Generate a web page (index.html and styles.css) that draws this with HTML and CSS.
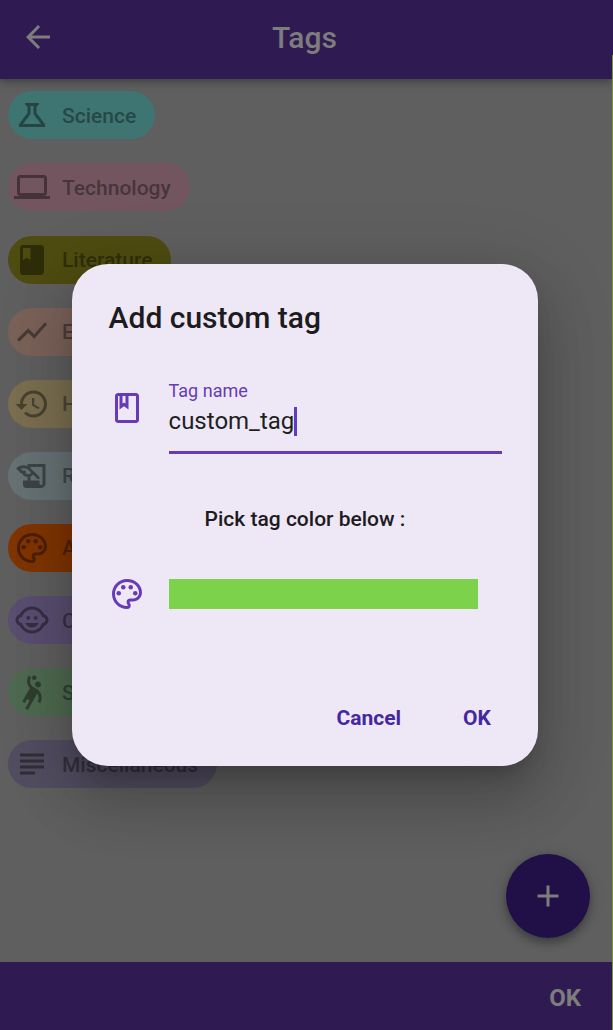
FILE: index.html
```html
<!DOCTYPE html>
<html lang="en">
<head>
<meta charset="utf-8">
<title>Tags</title>
<link rel="stylesheet" href="styles.css">
</head>
<body>
<div class="screen">
  <header class="appbar">
    <svg class="back" viewBox="0 0 24 24"><path d="M20 11H7.83l5.59-5.59L12 4l-8 8 8 8 1.41-1.41L7.83 13H20v-2z"/></svg>
    <h1 class="title">Tags</h1>
  </header>
  <main class="tags">
    <div class="chip science"><svg class="icon" viewBox="0 0 24 24"><path d="M13 11.33L18 18H6l5-6.67V6h2m3.6-2H7.4v1L9 6.5v4.17L3.2 18.4V20h17.6v-1.6L15 10.67V6.5L16.6 5z"/></svg><span>Science</span></div>
    <div class="chip technology"><svg class="icon" viewBox="0 0 24 24"><path d="M20 18c1.1 0 1.99-.9 1.99-2L22 6c0-1.1-.9-2-2-2H4c-1.1 0-2 .9-2 2v10c0 1.1.9 2 2 2H0v2h24v-2h-4zM4 6h16v10H4V6z"/></svg><span>Technology</span></div>
    <div class="chip literature"><svg class="icon" viewBox="0 0 24 24"><path d="M18 2H6c-1.1 0-2 .9-2 2v16c0 1.1.9 2 2 2h12c1.1 0 2-.9 2-2V4c0-1.1-.9-2-2-2zM6 4h5v8l-2.5-1.5L6 12V4z"/></svg><span>Literature</span></div>
    <div class="chip economy"><svg class="icon" viewBox="0 0 24 24"><path d="M3.5 18.49l6-6.01 4 4L22 6.92l-1.41-1.41-7.09 7.97-4-4L2 16.99z"/></svg><span>Economy</span></div>
    <div class="chip history"><svg class="icon" viewBox="0 0 24 24"><path d="M13 3c-4.97 0-9 4.03-9 9H1l3.89 3.89.07.14L9 12H6c0-3.87 3.13-7 7-7s7 3.13 7 7-3.13 7-7 7c-1.93 0-3.68-.79-4.94-2.06l-1.42 1.42C8.27 19.99 10.51 21 13 21c4.97 0 9-4.03 9-9s-4.03-9-9-9zm-1 5v5l4.28 2.54.72-1.21-3.5-2.08V8H12z"/></svg><span>History</span></div>
    <div class="chip religion"><svg class="icon" viewBox="0 0 24 24"><path d="M9 4v1.38c-.83-.33-1.72-.5-2.61-.5-1.79 0-3.58.68-4.95 2.05l3.33 3.33h1.11v1.11c.86.86 1.98 1.31 3.11 1.36V15H6v3c0 1.1.9 2 2 2h10c1.66 0 3-1.34 3-3V4H9zm-1.11 6.41V8.26H5.61L4.57 7.22a5.07 5.07 0 0 1 1.82-.34c1.34 0 2.59.52 3.54 1.46l1.41 1.41-.2.2a2.7 2.7 0 0 1-1.92.8c-.47 0-.93-.12-1.33-.34zM19 17c0 .55-.45 1-1 1s-1-.45-1-1v-2h-6v-2.59c.57-.23 1.1-.57 1.56-1.03l.2-.2L15.59 14H17v-1.41l-6-5.97V6h8v11z"/></svg><span>Religion</span></div>
    <div class="chip art"><svg class="icon" viewBox="0 0 24 24"><path d="M12 22C6.49 22 2 17.51 2 12S6.49 2 12 2s10 4.04 10 9c0 3.31-2.69 6-6 6h-1.77c-.28 0-.5.22-.5.5 0 .12.05.23.13.33.41.47.64 1.06.64 1.67A2.5 2.5 0 0 1 12 22zm0-18c-4.41 0-8 3.59-8 8s3.59 8 8 8c.28 0 .5-.22.5-.5a.54.54 0 0 0-.14-.35c-.41-.46-.63-1.05-.63-1.65a2.5 2.5 0 0 1 2.5-2.5H16c2.21 0 4-1.79 4-4 0-3.86-3.59-7-8-7z"/><circle cx="6.5" cy="11.5" r="1.5"/><circle cx="9.5" cy="7.5" r="1.5"/><circle cx="14.5" cy="7.5" r="1.5"/><circle cx="17.5" cy="11.5" r="1.5"/></svg><span>Art</span></div>
    <div class="chip children"><svg class="icon" viewBox="0 0 24 24"><circle cx="14.5" cy="10.5" r="1.25"/><circle cx="9.5" cy="10.5" r="1.25"/><path d="M22.94 12.66c.04-.21.06-.43.06-.66s-.02-.45-.06-.66c-.25-1.51-1.36-2.74-2.81-3.17-.53-1.12-1.28-2.1-2.19-2.91C16.36 3.85 14.28 3 12 3s-4.36.85-5.94 2.26c-.92.81-1.67 1.8-2.19 2.91-1.45.43-2.56 1.65-2.81 3.17-.04.21-.06.43-.06.66s.02.45.06.66c.25 1.51 1.36 2.74 2.81 3.17.52 1.11 1.27 2.09 2.17 2.89C7.62 20.14 9.71 21 12 21s4.38-.86 5.97-2.28c.9-.8 1.65-1.79 2.17-2.89 1.44-.43 2.55-1.65 2.8-3.17zM19 14c-.1 0-.19-.02-.29-.03-.2.67-.49 1.29-.86 1.86C16.6 17.74 14.45 19 12 19s-4.6-1.26-5.85-3.17c-.37-.57-.66-1.19-.86-1.86-.1.01-.19.03-.29.03-1.1 0-2-.9-2-2s.9-2 2-2c.1 0 .19.02.29.03.2-.67.49-1.29.86-1.86C7.4 6.26 9.55 5 12 5s4.6 1.26 5.85 3.17c.37.57.66 1.19.86 1.86.1-.01.19-.03.29-.03 1.1 0 2 .9 2 2s-.9 2-2 2zM7.5 14c.76 1.77 2.49 3 4.5 3s3.74-1.23 4.5-3h-9z"/></svg><span>Children</span></div>
    <div class="chip sport"><svg class="icon" viewBox="0 0 24 24"><path d="M14.27 6c-.55.95-.22 2.18.73 2.73.95.55 2.18.22 2.73-.73.55-.95.22-2.18-.73-2.73-.95-.55-2.18-.22-2.73.73zM15.84 10.41s-1.63-.94-2.6-1.5c-2.38-1.38-3.2-4.44-1.82-6.82l-1.73-1C8.1 3.83 8.6 7.21 10.66 9.4l-5.15 8.92 1.73 1 1.5-2.6 1.73 1-3 5.2 1.73 1 6.29-10.89c1.14 1.55 1.33 3.69.31 5.46l1.73 1c1.6-2.75 1.28-6.58-1.69-9.08zM12.75 3.8c.72.41 1.63.17 2.05-.55.41-.72.17-1.63-.55-2.05-.72-.41-1.63-.17-2.05.55-.41.72-.17 1.64.55 2.05z"/></svg><span>Sport</span></div>
    <div class="chip misc"><svg class="icon" viewBox="0 0 24 24"><path d="M14 17H4v2h10v-2zm6-8H4v2h16V9zM4 15h16v-2H4v2zM4 5v2h16V5H4z"/></svg><span>Miscellaneous</span></div>
  </main>
  <footer class="bottombar">OK</footer>
  <div class="fab"><svg class="plus" viewBox="0 0 24 24"><path d="M19 13h-6v6h-2v-6H5v-2h6V5h2v6h6v2z"/></svg></div>
  <div class="edge"></div>
  <div class="overlay">
    <section class="dialog">
      <h2 class="dialog-title">Add custom tag</h2>
      <div class="row name-row">
        <svg class="icon" viewBox="0 0 24 24"><path d="M18 2H6c-1.1 0-2 .9-2 2v16c0 1.1.9 2 2 2h12c1.1 0 2-.9 2-2V4c0-1.1-.9-2-2-2zM9 4h2v5l-1-.75L9 9V4zm9 16H6V4h1v9l3-2.25L13 13V4h5v16z"/></svg>
        <div class="field">
          <div class="label">Tag name</div>
          <div class="value"><span>custom_tag</span><i class="caret"></i></div>
        </div>
      </div>
      <p class="prompt">Pick tag color below :</p>
      <div class="row color-row">
        <svg class="icon" viewBox="0 0 24 24"><path d="M12 22C6.49 22 2 17.51 2 12S6.49 2 12 2s10 4.04 10 9c0 3.31-2.69 6-6 6h-1.77c-.28 0-.5.22-.5.5 0 .12.05.23.13.33.41.47.64 1.06.64 1.67A2.5 2.5 0 0 1 12 22zm0-18c-4.41 0-8 3.59-8 8s3.59 8 8 8c.28 0 .5-.22.5-.5a.54.54 0 0 0-.14-.35c-.41-.46-.63-1.05-.63-1.65a2.5 2.5 0 0 1 2.5-2.5H16c2.21 0 4-1.79 4-4 0-3.86-3.59-7-8-7z"/><circle cx="6.5" cy="11.5" r="1.5"/><circle cx="9.5" cy="7.5" r="1.5"/><circle cx="14.5" cy="7.5" r="1.5"/><circle cx="17.5" cy="11.5" r="1.5"/></svg>
        <div class="swatch"></div>
      </div>
      <div class="actions"><span>Cancel</span><span>OK</span></div>
    </section>
  </div>
</div>
</body>
</html>
```

FILE: styles.css
```css
* { box-sizing: border-box; }
body { margin: 0; font-family: Roboto, sans-serif; }
h1, h2, p { margin: 0; }
svg { display: block; fill: currentColor; flex: none; }

.screen {
  position: relative;
  width: 613px;
  height: 1030px;
  display: flex;
  flex-direction: column;
  background: #5f5f5f;
  overflow: hidden;
}

.appbar {
  height: 79px;
  flex: none;
  display: grid;
  grid-template-columns: 36px 1fr 36px;
  align-items: center;
  padding: 0 24px 5px 20px;
  background: #2f1b52;
  color: #7d7d7d;
  box-shadow: 0 2px 9px rgba(0, 0, 0, .4);
}
.back { width: 36px; height: 36px; }
.title {
  font-size: 30px;
  line-height: 36px;
  font-weight: 500;
  text-align: center;
  padding-top: 1px;
}

.tags {
  flex: 1;
  display: flex;
  flex-direction: column;
  align-items: flex-start;
  gap: 24.1px;
  padding: 12.4px 8px 0;
}
.chip {
  height: 48px;
  flex: none;
  display: flex;
  align-items: center;
  gap: 12px;
  padding: 0 19px 0 6px;
  border-radius: 24px;
  font-size: 21px;
  line-height: 24px;
  font-weight: 500;
  color: rgba(0, 0, 0, .4);
}
.chip span { padding-top: 1px; }
.icon { width: 36px; height: 36px; }
.science { background: #3e7471; }
.technology { background: #735560; }
.literature { background: #4e4c10; }
.economy { background: #7b6259; }
.history { background: #7b6f50; }
.religion { background: #677275; }
.art { background: #803500; }
.children { background: #5a4e71; }
.sport { background: #4e6a50; }
.misc { background: #524d60; }

.bottombar {
  height: 68px;
  flex: none;
  display: flex;
  align-items: center;
  justify-content: flex-end;
  padding: 4px 32px 0 0;
  background: #2f1b52;
  color: #7d7d7d;
  font-size: 24px;
  font-weight: 700;
}

.fab {
  position: absolute;
  right: 23px;
  bottom: 92.4px;
  width: 84px;
  height: 84px;
  border-radius: 50%;
  display: grid;
  place-items: center;
  background: #201047;
  color: #7d7d7d;
  box-shadow: 0 5px 9px rgba(0, 0, 0, .3), 0 1px 16px rgba(0, 0, 0, .12);
}
.plus { width: 36px; height: 36px; }

.edge {
  position: absolute;
  right: 0;
  top: 55px;
  bottom: 0;
  width: 1px;
  background: #76903a;
}

.overlay {
  position: absolute;
  inset: 0;
  display: flex;
  align-items: flex-start;
  padding: 263.5px 75.5px 0 72.2px;
}
.dialog {
  width: 100%;
  height: 502px;
  display: flex;
  flex-direction: column;
  padding: 36.6px 36px 36px 36.4px;
  border-radius: 36px;
  background: #eee8f6;
  color: #1d1b20;
  box-shadow: 0 16px 22px -10px rgba(0, 0, 0, .2), 0 36px 57px 4px rgba(0, 0, 0, .14), 0 14px 69px 12px rgba(0, 0, 0, .12);
}
.dialog-title {
  font-size: 30px;
  line-height: 36px;
  font-weight: 500;
}
.row { display: flex; gap: 24px; color: #673ab7; }
.name-row { margin-top: 42px; align-items: flex-start; }
.name-row .icon { margin-top: 12.2px; }
.field {
  flex: 1;
  height: 76px;
  border-bottom: 3px solid #673ab7;
}
.label { font-size: 18px; line-height: 24px; padding-top: 1px; }
.value {
  display: flex;
  align-items: center;
  height: 32px;
  margin-top: 2px;
  font-size: 24px;
  color: #1f1f1f;
}
.caret { width: 3px; height: 29px; background: #673ab7; }
.prompt {
  margin: 53.2px 0 0 96px;
  font-size: 21px;
  line-height: 24px;
  font-weight: 500;
}
.color-row { margin-top: 44.8px; align-items: center; }
.swatch { width: 309px; height: 30px; background: #7dd24b; }
.actions {
  display: flex;
  justify-content: flex-end;
  gap: 62px;
  margin-top: 93.8px;
  padding-right: 10.6px;
  font-size: 21px;
  line-height: 24px;
  font-weight: 700;
  color: #4527a0;
}
```
